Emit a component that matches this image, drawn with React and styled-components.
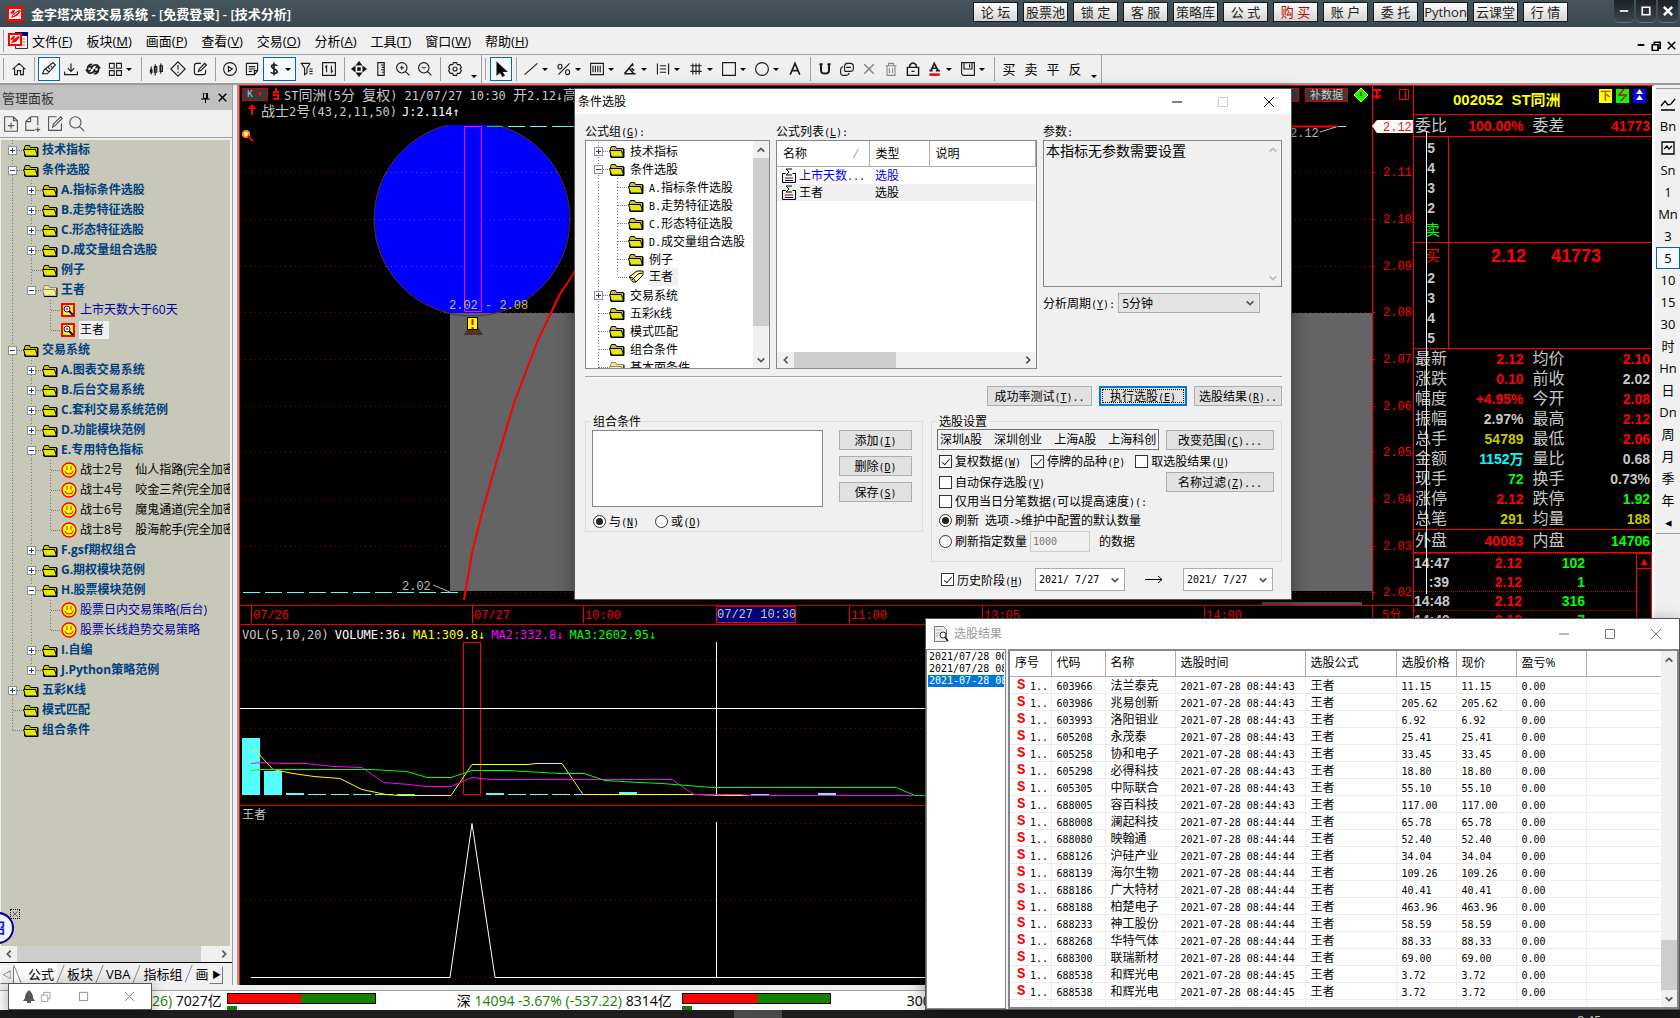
import styled, { createGlobalStyle, css } from "styled-components";

const UI = `"Open Sans", "Noto Sans CJK SC", sans-serif`;
const MONO = `"Liberation Mono", "Noto Sans CJK SC", monospace`;

const GlobalStyle = createGlobalStyle`
  * {
    box-sizing: border-box;
  }
  body {
    margin: 0;
    background: #f0f0f0;
    overflow: hidden;
  }
  button, input, select, textarea {
    font: inherit;
    color: inherit;
    margin: 0;
    padding: 0;
    border: 0;
    background: none;
    border-radius: 0;
  }
`;

const Page = styled.div`
  position: relative;
  display: flex;
  flex-direction: column;
  height: 100vh;
  overflow: hidden;
  font-family: ${UI};
  font-size: 13px;
  line-height: 16px;
  color: #000;
  white-space: nowrap;
`;

/* ---------- mixed text: wide glyphs at full size, ascii in a narrow face ---------- */

const Ascii = styled.span`
  font-family: "DejaVu Sans Mono", monospace;
  font-size: ${(p) => p.$size}px;
  line-height: 10px;
`;

const SongBox = styled.span`
  display: inline-block;
  height: 16px;
  vertical-align: top;
  font-family: "Noto Sans CJK SC", sans-serif;
  font-size: ${(p) => p.$size}px;
  line-height: 16px;
  white-space: pre;
`;

// "_X" in a label marks the keyboard mnemonic
const Song = ({ children, size = 12 }) => (
  <SongBox $size={size}>
    {String(children)
      .split(/([\x20-\x7e↓↑]+)/)
      .map((run, i) => {
        if (i % 2 === 0) return run;
        const [head, tail] = run.split("_");
        return (
          <Ascii key={i} $size={size - 2}>
            {head}
            {tail && <u>{tail[0]}</u>}
            {tail && tail.slice(1)}
          </Ascii>
        );
      })}
  </SongBox>
);

/* ---------- title bar ---------- */

const TitleBar = styled.header`
  display: flex;
  align-items: center;
  flex: none;
  height: 27px;
  padding-left: 7px;
  background: linear-gradient(#46545b, #3b484f);
  color: #fff;
`;

const TitleText = styled.h1`
  margin: 0 auto 0 8px;
  font-size: 13px;
  font-weight: 600;
`;

const LinkRow = styled.nav`
  display: flex;
  gap: 5px;
  align-self: flex-start;
  margin: 2px 46px 0 0;
`;

const LinkButton = styled.button`
  width: 45px;
  height: 20px;
  border: 1px solid #14191c;
  background: linear-gradient(#fdfdfd, #d5d5d5);
  color: ${(p) => (p.$hot ? "#c00000" : "#222")};
  font-size: 13px;
  line-height: 16px;
  text-align: center;
`;

const WinControls = styled.div`
  display: flex;
  gap: 2px;
  align-self: flex-start;
  margin-right: 2px;
`;

const WinButton = styled.button`
  display: grid;
  place-items: center;
  width: 20px;
  height: 22px;
  border-radius: 0 0 5px 5px;
  background: linear-gradient(#1c2226, #3c464c);
  box-shadow: 0 1px 0 #66747b;
`;

/* ---------- menu and tool bars ---------- */

const MenuBar = styled.nav`
  display: flex;
  align-items: center;
  flex: none;
  height: 28px;
  padding: 0 4px 0 1px;
  border-bottom: 1px solid #a0a0a0;
  background: #f0f0f0;
`;

const Grip = styled.span`
  width: 3px;
  height: 22px;
  margin-right: 4px;
  border-right: 1px solid #a0a0a0;
`;

const MenuItem = styled.button`
  margin-left: ${(p) => (p.$first ? 4 : 14)}px;
`;

const MdiControls = styled.div`
  display: flex;
  gap: 6px;
  margin: 10px 0 0 auto;
`;

const ToolBar = styled.div`
  display: flex;
  align-items: center;
  flex: none;
  height: 30px;
  border-bottom: 2px solid #9a9a9a;
  background: #f0f0f0;
`;

const ToolGroup = styled.div`
  display: flex;
  align-items: center;
  height: 28px;
  padding-left: 1px;
  border-right: 1px solid #a0a0a0;
`;

const Tool = styled.button`
  display: flex;
  align-items: center;
  justify-content: center;
  width: ${(p) => (p.$caret ? 33 : 22)}px;
  height: 24px;
  outline: ${(p) => (p.$on ? "1px solid #0a64ad" : "none")};
  outline-offset: -1px;
  background: ${(p) => (p.$on ? "#f5f9fd" : "none")};

  svg {
    flex: none;
  }
`;

const Caret = styled.span`
  width: ${(p) => (p.$low ? 15 : 11)}px;
  flex: none;

  &::after {
    content: "";
    display: block;
    margin: ${(p) => (p.$low ? "14px" : "0")} auto 0;
    width: 0;
    border: 3px solid transparent;
    border-top-color: #000;
    border-bottom: 0;
  }
`;

const Divider = styled.span`
  width: 1px;
  height: 24px;
  margin: 0 3px 0 4px;
  background: #a0a0a0;
`;

const glyphs = {
  home: <path d="M2 10.5 10 3l8 7.5M4.500 9v8H8v-5h4v5h3.500V9" />,
  pen: <path d="m2 16 2-5L15 2l3 3L8 16zM6 10l4 4M9 8l2 2M12 6l2 2" />,
  down: <path d="M10 3v10M6 9l4 4 4-4M2 13v4h16v-4" />,
  sync: (
    <path
      d="M9 4C3 4 2 10 4 13M1 11l3 3 3-3M4 7h4M11 16c6 0 7-6 5-9M19 9l-3-3-3 3M12 13h4M8 10c0-5 7-7 9-3M12 10c0 5-7 7-9 3"
      strokeWidth="2"
    />
  ),
  grid: <path d="M3 3h6v6H3zM12 3h6v6h-6zM3 12h6v6H3zM12 12h6v6h-6z" />,
  candle: <path d="M4 7v10M3 11h2v3H3zM9 4v14M8 7h3v7H8zM16 3v13M15 6h3v7h-3z" />,
  alert: <path d="m10 1 9 9-9 9-9-9zM10 5v6M10 13v2" />,
  edit: <path d="M11 3H6a3 3 0 0 0-3 3v8a3 3 0 0 0 3 3h8a3 3 0 0 0 3-3v-3M8 13l1-3 7-7 2 2-7 7z" />,
  play: <path d="M10 2a8 8 0 1 1 0 16 8 8 0 0 1 0-16zM8 7v6l5-3z" />,
  note: <path d="M3 3h14v9l-4 5H3zM6 7h8M6 10h8M6 13h4M17 12h-4v5" />,
  dollar: <path d="M14 6c-1-2-7-2-7 1s7 3 7 6-6 3-8 1M10 2v16" strokeWidth="2" />,
  filter: <path d="M2 3h12M3 3l4 6v8l3-2V9l4-6M13 10h4M13 13h4M13 16h4" />,
  swap: <path d="M2 2h16v16H2zM7 14V6L5 8M13 6v8l2-2" />,
  move: <path d="m10 1 3 4H7zM10 19l3-4H7zM1 10l4-3v6zM19 10l-4-3v6zM8.500 8.500h3v3h-3z" fill="#000" />,
  ruler: <path d="M6 2h8v16H6zM10 5h4M11 8h3M10 11h4M11 14h3" />,
  zoomIn: <path d="M8.500 2a6.500 6.500 0 1 1 0 13 6.500 6.500 0 0 1 0-13zM13 13l5 5M6 8.500h5M8.500 6v5" />,
  zoomOut: <path d="M8.500 2a6.500 6.500 0 1 1 0 13 6.500 6.500 0 0 1 0-13zM13 13l5 5M6 8.500h5" />,
  gear: (
    <>
      <path d="m8 2 4 0 1 2.500 3 0 2 3.500-1.500 2L18 12l-2 3.500-3 0L12 18H8l-1-2.500-3 0L2 12l1.500-2L2 8l2-3.500 3 0z" />
      <circle cx="10" cy="10" r="2.500" />
    </>
  ),
  cursor: <path d="m5 2 12 11h-6l3 5-2 1-3-5-4 3z" fill="#000" />,
  line: <path d="M2 17 18 3" />,
  percent: <path d="M3 17 17 3M5 4a2.500 3 0 1 1 0 6 2.500 3 0 0 1 0-6zM14.500 11a2.500 3 0 1 1 0 6 2.500 3 0 0 1 0-6z" />,
  fence: <path d="M2 3h16v14H2zM5 6v8M8 6v8M11 6v8M14 6v8" />,
  angle: <path d="M3 16 13 4l1 2M3 16h14M9 9l5 6M12 9l3 3" strokeWidth="2" />,
  hbars: <path d="M3 3v14M17 3v14M6 6h8M6 10h8M6 14h8" />,
  hash: <path d="M6 3v14M10 3v14M14 3v14M3 6h14M3 13h14" />,
  square: <path d="M2 2h16v16H2z" />,
  circle: <circle cx="10" cy="10" r="8" />,
  letter: <path d="m4 17 6-14 6 14M6 12h8" strokeWidth="2" />,
  magnet: <path d="M5 4v8c0 5 10 5 10 0V4M3 4h4M13 4h4" strokeWidth="2.500" />,
  copy: (
    <>
      <path d="M8 3h6q4 0 4 4v2q0 4-4 4H8q-1 0-1-1V7q0-4 4-4" />
      <path d="M5 7q-3 1-3 4v3q0 4 4 4h3q3 0 4-3M9 8h6" />
    </>
  ),
  cross: <path d="m4 4 12 12M16 4 4 16" stroke="#888" strokeWidth="2" />,
  trash: <path d="M3 6h14M7 6V3h6v3M5 6v12h10V6M8 9v6M12 9v6" stroke="#888" />,
  lock: <path d="M3 8h14v10H3zM6 8V5q4-5 8 0v3M8 13h4" strokeWidth="1.800" />,
  color: (
    <>
      <path d="m5 12 4-9 5 9M7 9h5M3 12h4M11 12h5" strokeWidth="2" />
      <path d="M3 17h13" stroke="#e00000" strokeWidth="3" />
    </>
  ),
  save: <path d="M2 2h16v16H4l-2-2zM5 2v8h10V2M12 4v4" />,
  docPlus: <path d="M2 1h11l5 5v13H2zM13 1v5h5M10 8v8M6 12h8" />,
  docAdd: <path d="M7 1h9v11M7 1 1 7v11h11M7 1v6H1M16 14v6M13 17h6" />,
  pencil: <path d="M12 1H2v17h16V9M7 14l1-4 9-9 2 2-9 9z" />,
  search: <path d="M8 1a7 7 0 1 1 0 14A7 7 0 0 1 8 1zM13 13l6 6" />,
};

const Glyph = ({ name, color = "#1a1a1a", size = 16 }) => (
  <svg width={size} height={size} viewBox="0 0 20 20" fill="none" stroke={color} strokeWidth="1.400">
    {glyphs[name]}
  </svg>
);

/* ---------- small line icons for window frames ---------- */

const frameGlyphs = {
  min: <path d="M1 6h10" />,
  max: <path d="M1.500 1.500h9v9h-9z" />,
  close: <path d="m1 1 10 10M11 1 1 11" />,
  restore: <path d="M1.500 4.500h7v7h-7zM4 4V1.500h7v7H9" />,
  up: <path d="m2 8 4-4 4 4" strokeWidth="2" />,
  down: <path d="m2 4 4 4 4-4" strokeWidth="2" />,
  left: <path d="M8 2 4 6l4 4" strokeWidth="2" />,
  right: <path d="m4 2 4 4-4 4" strokeWidth="2" />,
};

const FrameGlyph = ({ name, color = "#000", size = 12, weight = 1 }) => (
  <svg width={size} height={size} viewBox="0 0 12 12" fill="none" stroke={color} strokeWidth={weight}>
    {frameGlyphs[name]}
  </svg>
);

const AppLogo = () => (
  <svg width="16" height="16" viewBox="0 0 16 16">
    <path fill="#f00" d="M0 0h16v16H0z" />
    <path fill="#fff" d="M2 3h12v10H2z" />
    <path d="m3 7 3-3h2l-1 3-3 1zM4 12l2-4 6-4 2 1-4 5-3 1z" fill="#f00" />
    <path d="M6 10 11 6" stroke="#fff" />
  </svg>
);

const MdiLogo = () => (
  <svg width="20" height="18" viewBox="0 0 20 18">
    <path fill="#eee" stroke="#333" d="M7.500.5h12v16h-12z" />
    <path fill="#000080" d="M7 0h13v4H7z" />
    <path d="M11 7h6M11 10h6M11 13h6" stroke="#888" />
    <path fill="#f00" d="M0 1h14v13H0z" />
    <path fill="#fff" d="M2 3h10v9H2z" />
    <path d="m2 7 3-3h2L6 7 4 8zM3 11l2-3 5-4 2 1-4 5z" fill="#f00" />
  </svg>
);

/* ---------- workspace ---------- */

const Workspace = styled.main`
  display: flex;
  flex: 1;
  min-height: 0;
`;

const SidePanel = styled.aside`
  display: flex;
  flex-direction: column;
  flex: none;
  width: 233px;
  border-right: 1px solid #9a9a9a;
`;

const PanelHead = styled.div`
  display: flex;
  align-items: center;
  gap: 8px;
  height: 25px;
  flex: none;
  padding: 0 5px 0 2px;
  background: #c0c0c0;
  color: #333;
`;

const PanelName = styled.h2`
  flex: 1;
  margin: 0;
  font-size: 13px;
  font-weight: 400;
`;

const PanelTools = styled.div`
  display: flex;
  gap: 6px;
  align-items: center;
  height: 28px;
  flex: none;
  padding-left: 3px;
  border-bottom: 1px solid #9a9a9a;

  button {
    display: flex;
  }
`;

const TreeBox = styled.div`
  flex: 1;
  min-height: 0;
  overflow: hidden;
  margin: 2px 2px 0 1px;
  background: #c8c8b8;
`;

const Row = styled.div`
  display: flex;
  align-items: stretch;
  height: ${(p) => p.$h}px;
  padding-left: 6px;
`;

const dotted = css`
  background-image: repeating-linear-gradient(#777 0 1px, transparent 1px 3px);
  background-repeat: no-repeat;
  background-position: 5px 0;
`;

const Guide = styled.span`
  flex: none;
  width: 19px;
  ${(p) => p.$line && dotted}
  background-size: 1px 100%;
`;

const Twist = styled.span`
  position: relative;
  flex: none;
  width: 16px;
  ${dotted}
  background-size: 1px ${(p) => (p.$last ? "50%" : "100%")};

  &::before {
    content: "";
    position: absolute;
    left: 6px;
    right: 1px;
    top: 50%;
    border-top: 1px dotted #777;
  }
`;

const Expander = styled.button`
  position: absolute;
  left: 1px;
  top: calc(50% - 4px);
  width: 9px;
  height: 9px;
  background: #fff;
  outline: 1px solid #919191;
  outline-offset: -1px;

  &::before {
    content: "";
    position: absolute;
    left: 2px;
    top: 4px;
    width: 5px;
    height: 1px;
    background: #1d3f8f;
  }
  &::after {
    content: "";
    display: ${(p) => (p.$open ? "none" : "block")};
    position: absolute;
    left: 4px;
    top: 2px;
    width: 1px;
    height: 5px;
    background: #1d3f8f;
  }
`;

const RowIcon = styled.span`
  display: flex;
  align-items: center;
  flex: none;
  width: 16px;
`;

const RowText = styled.span`
  align-self: center;
  margin-left: ${(p) => (p.$tone === "plain" ? 4 : 2)}px;
  padding: 0 ${(p) => (p.$picked ? 5 : 0)}px 0 1px;
  font-size: 12px;
  font-weight: ${(p) => (p.$tone === "group" ? 700 : 400)};
  color: ${(p) => ({ group: "#00407f", item: "#00009c" })[p.$tone] || "#000"};
  background: ${(p) => (p.$picked ? "#f0f0f0" : "none")};
  line-height: ${(p) => (p.$picked ? 18 : 16)}px;
  white-space: pre;
`;

const Folder = ({ pale }) => (
  <svg width="16" height="13" viewBox="0 0 16 13">
    <path d="M1.500 12V3.500l1-2h4l1 2h7V12z" fill={pale ? "#eee880" : "#c8c800"} stroke={pale ? "#888" : "#000"} />
    <path d="M.5 5.500h12l2 6.500h-12z" fill={pale ? "#f6f090" : "#e6e610"} stroke={pale ? "#888" : "#000"} />
    <path d="M15 4v8.500H2" fill="none" stroke="#000" />
  </svg>
);

const OpenFolder = () => (
  <svg width="16" height="14" viewBox="0 0 16 14">
    <path d="m1 7 8-6h6v4l-7 7H5z" fill="#ffff9a" stroke="#000" />
    <path d="m4 10 6-6 4-1M1 7l4 1 3 4" fill="none" stroke="#000" />
  </svg>
);

const Smile = () => (
  <svg width="16" height="16" viewBox="0 0 16 16">
    <circle cx="8" cy="8" r="7" fill="#ff0" stroke="#f00" strokeWidth="1.400" />
    <path d="M6 4v4M10 4v4M4 9q0 3 4 3t4-3" fill="none" stroke="#f00" />
  </svg>
);

const Finder = () => (
  <svg width="14" height="14" viewBox="0 0 14 14">
    <path fill="#ff0" stroke="#f00" strokeWidth="2" d="M1 1h12v12H1z" />
    <circle cx="6" cy="6" r="3" fill="#fff" stroke="#0000b0" />
    <path d="m8 8 4 4" stroke="#0000b0" strokeWidth="2" />
    <circle cx="6" cy="6" r="1" fill="#f00" />
  </svg>
);

const icons = {
  folder: <Folder />,
  pale: <Folder pale />,
  openFolder: <OpenFolder />,
  smile: <Smile />,
  finder: <Finder />,
};

const TreeRow = ({ node, height, plain }) => {
  const [level, mark, icon, text, picked, opts = ""] = node;
  const tone = plain ? "plain" : icon === "folder" || icon === "pale" ? "group" : picked || opts.includes("k") ? "dark" : "item";
  return (
    <Row $h={height}>
      {Array.from({ length: level }, (_, i) => (
        <Guide key={i} $line={!(i === 1 && opts.includes("e"))} />
      ))}
      <Twist $last={opts.includes("l")}>{mark && <Expander $open={mark === "-"} aria-label={text} />}</Twist>
      <RowIcon>{icons[icon]}</RowIcon>
      <RowText $tone={tone} $picked={picked}>
        {plain ? <Song>{text}</Song> : text}
      </RowText>
    </Row>
  );
};

// level, expander, icon, label, picked, options (l: last child, e: parent is last, k: black)
const sideTree = [
  [0, "+", "folder", "技术指标"],
  [0, "-", "folder", "条件选股"],
  [1, "+", "folder", "A.指标条件选股"],
  [1, "+", "folder", "B.走势特征选股"],
  [1, "+", "folder", "C.形态特征选股"],
  [1, "+", "folder", "D.成交量组合选股"],
  [1, "", "folder", "例子"],
  [1, "-", "pale", "王者", false, "l"],
  [2, "", "finder", "上市天数大于60天", false, "e"],
  [2, "", "finder", "王者", true, "el"],
  [0, "-", "folder", "交易系统"],
  [1, "+", "folder", "A.图表交易系统"],
  [1, "+", "folder", "B.后台交易系统"],
  [1, "+", "folder", "C.套利交易系统范例"],
  [1, "+", "folder", "D.功能模块范例"],
  [1, "-", "folder", "E.专用特色指标"],
  [2, "", "smile", "战士2号    仙人指路(完全加密)", false, "k"],
  [2, "", "smile", "战士4号    咬金三斧(完全加密)", false, "k"],
  [2, "", "smile", "战士6号    魔鬼通道(完全加密)", false, "k"],
  [2, "", "smile", "战士8号    股海舵手(完全加密)", false, "kl"],
  [1, "+", "folder", "F.gsf期权组合"],
  [1, "+", "folder", "G.期权模块范例"],
  [1, "-", "folder", "H.股票模块范例"],
  [2, "", "smile", "股票日内交易策略(后台)"],
  [2, "", "smile", "股票长线趋势交易策略", false, "l"],
  [1, "+", "folder", "I.自编"],
  [1, "+", "folder", "J.Python策略范例", false, "l"],
  [0, "+", "folder", "五彩K线"],
  [0, "", "folder", "模式匹配"],
  [0, "", "folder", "组合条件", false, "l"],
];

const dialogTree = [
  [0, "+", "folder", "技术指标"],
  [0, "-", "folder", "条件选股"],
  [1, "", "folder", "A.指标条件选股"],
  [1, "", "folder", "B.走势特征选股"],
  [1, "", "folder", "C.形态特征选股"],
  [1, "", "folder", "D.成交量组合选股"],
  [1, "", "folder", "例子"],
  [1, "", "openFolder", "王者", true, "l"],
  [0, "+", "folder", "交易系统"],
  [0, "", "folder", "五彩K线"],
  [0, "", "folder", "模式匹配"],
  [0, "", "folder", "组合条件"],
  [0, "", "pale", "基本面条件"],
];

/* ---------- scroll bars ---------- */

const Scroll = styled.div`
  display: flex;
  flex-direction: ${(p) => (p.$v ? "column" : "row")};
  flex: none;
  ${(p) => (p.$v ? "width" : "height")}: 16px;
  background: #f0f0f0;

  button {
    display: grid;
    place-items: center;
    width: 17px;
    height: 17px;
    flex: none;
    align-self: center;
  }
`;

const Track = styled.div`
  flex: 1;
  display: flex;
  flex-direction: inherit;
`;

const Thumb = styled.div`
  flex: ${(p) => p.$len} 0 0;
  background: #cdcdcd;
`;

const Room = styled.div`
  flex: ${(p) => p.$len} 0 0;
`;

const ScrollBar = ({ vertical, before = 0, thumb, after = 0, dim }) => {
  const color = dim ? "#bbb" : "#555";
  return (
    <Scroll $v={vertical}>
      <button aria-label="back">
        <FrameGlyph name={vertical ? "up" : "left"} color={color} size={10} weight={2} />
      </button>
      <Track>
        <Room $len={before} />
        <Thumb $len={thumb} />
        <Room $len={after} />
      </Track>
      <button aria-label="forward">
        <FrameGlyph name={vertical ? "down" : "right"} color={color} size={10} weight={2} />
      </button>
    </Scroll>
  );
};

const TabStrip = styled.div`
  display: flex;
  align-items: stretch;
  height: 22px;
  flex: none;
  margin-bottom: 1px;
  border-top: 1px solid #000;
  overflow: hidden;
`;

const TabArrow = styled.button`
  width: 14px;
  flex: none;
  margin-top: 3px;
  border: 1px solid #fff;
  border-right-color: #777;
  border-bottom-color: #777;
  background: #f0f0f0;
  font-size: 9px;
  line-height: 12px;
`;

const Tab = styled.button`
  position: relative;
  flex: ${(p) => (p.$cut ? "0 0 24px" : "none")};
  overflow: ${(p) => (p.$cut ? "hidden" : "visible")};
  padding: 0 3px 0 ${(p) => (p.$first ? 14 : 10)}px;
  background: ${(p) => (p.$first ? "#fff" : "none")};
  text-align: left;

  &::after {
    content: "";
    position: absolute;
    left: 3px;
    top: 2px;
    height: 18px;
    border-left: 1px solid #888;
    transform: skewX(${(p) => (p.$first ? 22 : -22)}deg);
  }
`;

/* ---------- chart ---------- */

const ChartArea = styled.section`
  display: flex;
  flex-direction: column;
  flex: 1;
  min-width: 0;
  margin-left: 4px;
  border-left: 2px solid #9a9a9a;
  background: #000;
  font-family: ${MONO};
`;

const Pane = styled.div`
  position: relative;
  flex: ${(p) => p.$share} 0 0;
  min-height: 0;
  overflow: hidden;
  border-left: 1px solid #f00;
  border-top: 1px solid #e00000;

  & > svg {
    display: block;
    width: 100%;
    height: 100%;
  }
`;

const PaneHead = styled.div`
  position: absolute;
  inset: 0 0 auto 0;
  padding-left: 2px;
  color: #c8c8c8;
`;

const HeadLine = styled.div`
  display: flex;
  align-items: center;
  gap: ${(p) => p.$gap}px;
  height: 16px;
`;

const KindButton = styled.button`
  width: 26px;
  height: 13px;
  border: 1px solid #d00000;
  background: #3a3a3a;
  color: #b0c4de;
  font: 10px/11px ${MONO};
  text-align: left;
  padding-left: 4px;

  i {
    color: #f00;
    font-style: normal;
    margin-left: 3px;
  }
`;

const Tint = styled.span`
  color: ${(p) => p.$c};
`;

const PaneTools = styled.div`
  position: absolute;
  top: 1px;
  right: 3px;
  display: flex;
  align-items: center;
  gap: 6px;
`;

const DataButton = styled.button`
  height: 14px;
  width: 43px;
  border: 1px solid #e00000;
  background: #3a3a3a;
  color: #ccc;
  font: 11px/12px ${UI};
`;

const gridY = [86, 133, 180, 226, 273, 320, 366, 413, 460, 506];
const priceTicks = ["2.11", "2.10", "2.09", "2.08", "2.07", "2.06", "2.05", "2.04", "2.03", "2.02"];

const PricePane = () => (
  <Pane $share={521}>
    <svg fontFamily="Liberation Mono, Noto Sans CJK SC, monospace" fontSize="12">
      <defs>
        <clipPath id="bubble">
          <path d="M0 39h1200v190H0z" />
        </clipPath>
      </defs>
      <g stroke="#900" strokeDasharray="1 4">
        {gridY.map((y) => (
          <path key={y} d={`M0 ${y}.5H1132`} />
        ))}
      </g>
      <ellipse cx="232" cy="133" rx="98" ry="97" fill="#00f" stroke="#5a3020" clipPath="url(#bubble)" />
      <g stroke="#5050c8" strokeDasharray="1 4">
        <path d="M146 86.5H318M134 133.500H330M146 180.500H318" />
      </g>
      <path d="M210 227h922v278H210z" fill="#646464" />
      <path d="M203 226q29 8 58 0" fill="none" stroke="#5a3020" />
      <path d="M224.500 40.500h17v185h-17z" fill="#00f" stroke="#f0f" />
      <path d="M247 40.500h16" stroke="#3c0" />
      <path d="M268 40.500h17M290 40.500h17M312 40.500h30" stroke="#5ff" />
      <path
        d="M342 170 332 190 320 208 298 254 274 317 255 381 242 427 232 467 224 514"
        fill="none"
        stroke="#f00"
        strokeWidth="2"
      />
      <path d="M3 506.500h216" stroke="#5ff" strokeDasharray="17 5" />
      <text x="162" y="504" fill="#b8b8b8">2.02</text>
      <path d="m193 499 17 7" stroke="#b8b8b8" />
      <text x="209" y="223" fill="#c0c080">2.02 - 2.08</text>
      <path d="m224 249 4-8h10l5 8z" fill="#5a3020" />
      <path d="M227.500 231.500h10v12h-10z" fill="#ff0" stroke="#000" />
      <path d="M232.500 233v6M232.500 241v2" stroke="#f00" strokeWidth="2" />
      <circle cx="6" cy="48" r="3" fill="#fff" stroke="#f90" strokeWidth="2" />
      <path d="m8 50 5 5" stroke="#f00" strokeWidth="2" />
      <path d="M1052 40.500h46" stroke="#f00" strokeWidth="2" />
      <path d="M1098 40.500h8" stroke="#5ff" />
      <text x="1050" y="51" fill="#b8b8b8">2.12</text>
      <path d="m1080 46 16-5" stroke="#b8b8b8" />
      <path d="M1132.500 0v514" stroke="#f00" />
      <path d="m1132 40 5-6h36v13h-36z" fill="#fff" />
      <g fill="#f00">
        <text x="1143" y="45">2.12</text>
        {priceTicks.map((t, i) => (
          <text key={t} x="1143" y={gridY[i] + 4}>
            {t}
          </text>
        ))}
      </g>
      <g stroke="#f00">
        {gridY.map((y) => (
          <path key={y} d={`M1132 ${y}.5h3`} />
        ))}
      </g>
      <path d="M1022 516h100v4h-100z" fill="#505050" />
    </svg>
    <PaneHead>
      <HeadLine $gap={4}>
        <KindButton>
          K<i>▾</i>
        </KindButton>
        <svg width="8" height="14" viewBox="0 0 8 14" fill="none" stroke="#f00" strokeWidth="2">
          <path d="M7 5H2v3h4v4H1M4 1v3" />
        </svg>
        <Song size={14}>ST同洲(5分 复权) 21/07/27 10:30 开2.12↓高2.12↓</Song>
      </HeadLine>
      <HeadLine $gap={5}>
        <svg width="14" height="12" viewBox="0 0 14 12">
          <path d="m10 0 4 5h-3v6H9V5H6z" fill="#f00" />
        </svg>
        <Song size={14}>战士2号(43,2,11,50)</Song>
        <Tint $c="#fff">
          <Song size={14}>J:2.114↑</Song>
        </Tint>
      </HeadLine>
    </PaneHead>
    <PaneTools>
      <DataButton aria-label="more" />
      <DataButton>补数据</DataButton>
      <svg width="56" height="16" viewBox="0 0 56 16">
        <path d="m7 1 7 7-7 7-7-7z" fill="#0f0" stroke="#ff0" />
        <path d="M7 5v4" stroke="#c33" strokeWidth="2" />
        <path d="M19 3h8M23 2v10M19 8q4 6 8 0" fill="none" stroke="#f00" strokeWidth="2" />
        <path d="M45.500 2.500h9v10h-9zM51.500 2v10" fill="none" stroke="#f00" />
      </svg>
    </PaneTools>
  </Pane>
);

const times = [
  [11, "07/26"],
  [232, "07/27"],
  [343, "10:00"],
  [609, "11:00"],
  [742, "13:05"],
  [964, "14:00"],
];

const TimePane = () => (
  <Pane $share={18}>
    <svg fontFamily="Liberation Mono, Noto Sans CJK SC, monospace" fontSize="12" fill="#f00">
      {times.map(([x, t]) => (
        <g key={t}>
          <path d={`M${x}.5 0v17`} stroke="#f00" />
          <text x={x + 2} y="13">
            {t}
          </text>
        </g>
      ))}
      <path d="M1132.500 0v17" stroke="#f00" />
      <text x="1142" y="13">5分</text>
      <path d="M476.500.5h79v16h-79z" fill="#000080" stroke="#f00" />
      <text x="477" y="12" fill="#d8d8d8">
        07/27 10:30
      </text>
    </svg>
  </Pane>
);

const volBars = [
  [0, 57], [1, 24], [2, 2], [3, 1], [4, 1], [5, 1], [6, 1], [7, 1], [11, 2], [12, 1], [13, 1], [14, 1], [15, 1],
  [16, 1], [17, 3], [18, 1], [19, 1], [20, 1], [21, 1], [23, 1], [26, 2],
];

const VolumePane = () => (
  <Pane $share={180}>
    <svg fill="none">
      <path d="M0 35.500h1174M0 103.500h1174M0 170.500h1174" stroke="#900" strokeDasharray="1 4" />
      {volBars.map(([i, h]) => (
        <rect key={i} x={2 + Math.round(i * 22.15)} y={170 - h} width="18" height={h} fill="#5ff" />
      ))}
      <path d="M223.500 17.500h17v152h-17z" fill="#000" stroke="#f00" />
      <path d="M0 83.500h1174M476.500 17v154" stroke="#fff" />
      <path
        stroke="#ff0"
        d="M11 120.500 33 144.500 53 148.500 74 151.500 100 153.500 122 164.500 146 169.500 160 170.500H211L232 139.500H288L296 138.500H322L343 169.500H454L488 170.500H510"
      />
      <path
        stroke="#f0f"
        d="M11 138.500 22 137.500 45 138.500 66 138.500 94 141.500 122 142.500 144 157.500 169 159.500 185 161.500H211L232 152.500 251 154.500H432L454 169.500H500L510 170.500H673"
      />
      <path
        stroke="#0f0"
        d="M11 145.500 22 144.500H131L167 146.500 187 152.500H211L232 145.500H267L320 148.500H344L365 155.500 400 157.500 422 158.500 472 162.500H656L675 170.500H1174"
      />
    </svg>
    <PaneHead>
      <HeadLine $gap={6}>
        <Song size={14}>VOL(5,10,20)</Song>
        <Tint $c="#fff">
          <Song size={14}>VOLUME:36↓</Song>
        </Tint>
        <Tint $c="#ff0">
          <Song size={14}>MA1:309.8↓</Song>
        </Tint>
        <Tint $c="#f0f">
          <Song size={14}>MA2:332.8↓</Song>
        </Tint>
        <Tint $c="#0f0">
          <Song size={14}>MA3:2602.95↓</Song>
        </Tint>
      </HeadLine>
    </PaneHead>
  </Pane>
);

const SignalPane = () => (
  <Pane $share={180}>
    <svg fill="none">
      <path d="M0 17.500h1174M0 94.500h1174M0 171.500h1174" stroke="#900" strokeDasharray="1 4" />
      <path d="M11 171.500H210L232 17.500 255 171.500H1174M476.500 16v156" stroke="#fff" />
    </svg>
    <PaneHead>
      <Song size={12}>王者</Song>
    </PaneHead>
  </Pane>
);

/* ---------- quote panel ---------- */

const QuotePanel = styled.section`
  position: relative;
  display: flex;
  flex-direction: column;
  flex: none;
  width: 242px;
  border-left: 1px solid #f00;
  border-top: 1px solid #f00;
  border-right: 3px solid #fff;
  background: #000;
  color: #c8c8c8;
  overflow: hidden;
  font: 16px/20px "Liberation Sans", "Noto Sans CJK SC", sans-serif;
`;

const QuoteHead = styled.div`
  display: flex;
  align-items: center;
  gap: 4px;
  flex: none;
  height: 28px;
  padding: 0 6px 0 39px;
  color: #ff0;
  font-weight: 700;
`;

const QuoteName = styled.h2`
  flex: 1;
  margin: 0;
  font-size: 15px;
  white-space: pre;
`;

const Badge = styled.span`
  align-self: flex-start;
  margin-top: 3px;
  width: 13px;
  height: 14px;
  background: ${(p) => p.$bg};
  color: ${(p) => p.$c};
  font-size: 11px;
  line-height: 14px;
  text-align: center;
`;

const QuoteRow = styled.div`
  display: grid;
  grid-template-columns: 32px 1fr 34px 1fr;
  column-gap: 2px;
  align-items: center;
  flex: none;
  height: ${(p) => p.$h || 20}px;
  padding: 0 2px 0 1px;
  border-top: ${(p) => (p.$rule ? "1px solid #f00" : "0")};
  border-bottom: ${(p) => (p.$under ? "1px solid #f00" : "0")};

  b {
    font-size: 14px;
    text-align: right;
    padding-right: 7px;
  }
  b:last-child {
    padding-right: 0;
  }
`;

const Figure = styled.b`
  color: ${(p) => p.$c};
`;

const Depth = styled.div`
  display: flex;
  flex: none;
  height: 106px;
  border-bottom: 1px solid #f00;
`;

const Levels = styled.div`
  width: 35px;
  padding-right: 13px;
  border-right: 1px solid #f00;
  text-align: right;
  font-size: 14px;
  font-weight: 700;
  padding-top: 1px;
`;

const Side = styled.div`
  color: ${(p) => p.$c};
  font-size: 15px;
  font-weight: 400;
  line-height: 24px;
  margin-right: -5px;
`;

const BigOrder = styled.div`
  display: flex;
  gap: 25px;
  padding: 3px 0 0 42px;
  color: #f00;
  font-size: 18px;
  font-weight: 700;
`;

const Cursor = styled.div`
  position: absolute;
  left: 12px;
  top: 45px;
  width: 1px;
  height: 463px;
  background: #fff;
`;

const Ticks = styled.div`
  display: flex;
  flex: 1;
  min-height: 0;
  overflow: hidden;
`;

const TickList = styled.div`
  flex: 1;
`;

const TickRow = styled.div`
  display: grid;
  grid-template-columns: 35px 73px 63px;
  height: 19px;
  font-size: 14px;
  font-weight: 700;
  line-height: 18px;
  text-align: right;
  border-top: 1px dotted ${(p) => (p.$rule ? "#c00" : "transparent")};
`;

const TickScroll = styled.div`
  width: 16px;
  border: 1px solid #f00;
  color: #f00;
  font-size: 11px;
  line-height: 14px;
  text-align: center;

  &::after {
    content: "";
    display: block;
    border-top: 1px solid #f00;
  }
`;

const R = "#f00";
const G = "#0f0";
const W = "#c8c8c8";
const Y = "#c8c800";

const quotes = [
  ["最新", "2.12", R, "均价", "2.10", R],
  ["涨跌", "0.10", R, "前收", "2.02", W],
  ["幅度", "+4.95%", R, "今开", "2.08", R],
  ["振幅", "2.97%", W, "最高", "2.12", R],
  ["总手", "54789", Y, "最低", "2.06", R],
  ["金额", "1152万", "#0ff", "量比", "0.68", W],
  ["现手", "72", G, "换手", "0.73%", W],
  ["涨停", "2.12", R, "跌停", "1.92", G],
  ["总笔", "291", Y, "均量", "188", Y],
];

const tickData = [
  ["14:47", "2.12", "102", true],
  [":39", "2.12", "1", false],
  ["14:48", "2.12", "316", true],
  ["14:49", "2.12", "7", true],
];

const QuoteLine = ({ data: [a, av, ac, b, bv, bc], ...rest }) => (
  <QuoteRow {...rest}>
    <span>{a}</span>
    <Figure $c={ac}>{av}</Figure>
    <span>{b}</span>
    <Figure $c={bc}>{bv}</Figure>
  </QuoteRow>
);

const Quote = () => (
  <QuotePanel>
    <QuoteHead>
      <QuoteName>002052  ST同洲</QuoteName>
      <Badge $bg="#ff0" $c="#a60">下</Badge>
      <Badge $bg="#0f0">
        <svg width="9" height="12" viewBox="0 0 9 12" fill="none" stroke="#d00" strokeWidth="1.500">
          <path d="M6 0 1 6h7L3 12" />
        </svg>
      </Badge>
      <Badge $bg="#00f">
        <svg width="9" height="12" viewBox="0 0 9 12" fill="#ff8">
          <path d="M4.500 0 8 5H1zM4.500 6 8 11H1z" />
        </svg>
      </Badge>
    </QuoteHead>
    <QuoteLine $h={23} $rule $under data={["委比", "100.00%", R, "委差", "41773", R]} />
    <Depth>
      <Levels>
        <div>5</div>
        <div>4</div>
        <div>3</div>
        <div>2</div>
        <Side $c="#0f0">卖</Side>
      </Levels>
    </Depth>
    <Depth>
      <Levels>
        <Side $c="#f00">买</Side>
        <div>2</div>
        <div>3</div>
        <div>4</div>
        <div>5</div>
      </Levels>
      <BigOrder>
        <span>2.12</span>
        <span>41773</span>
      </BigOrder>
    </Depth>
    {quotes.map((q) => (
      <QuoteLine key={q[0]} data={q} />
    ))}
    <QuoteLine $h={24} $rule $under data={["外盘", "40083", R, "内盘", "14706", G]} />
    <Ticks>
      <TickList>
        {tickData.map(([t, p, v, rule]) => (
          <TickRow key={t} $rule={rule}>
            <span>{t}</span>
            <Figure $c={R}>{p}</Figure>
            <Figure $c={G}>{v}</Figure>
          </TickRow>
        ))}
      </TickList>
      <TickScroll>▲</TickScroll>
    </Ticks>
    <Cursor />
  </QuotePanel>
);

const PeriodBar = styled.nav`
  display: flex;
  flex-direction: column;
  align-items: stretch;
  align-self: flex-start;
  flex: none;
  width: 24px;
  margin: 3px 0 0 1px;
  padding-top: 4px;
  border-top: 1px solid #999;
  border-bottom: 1px solid #999;
`;

const Period = styled.button`
  height: 22px;
  border: ${(p) => (p.$on ? "1px solid #0a64ad" : "0")};
  background: ${(p) => (p.$on ? "#f6fafd" : "none")};
  font: 13px/20px ${UI};

  svg {
    display: block;
    margin: 0 auto;
  }
`;

const periods = ["line", "Bn", "box", "Sn", "1", "Mn", "3", "5", "10", "15", "30", "时", "Hn", "日", "Dn", "周", "月", "季", "年"];

const PeriodGlyph = ({ boxed }) => (
  <svg width="16" height="16" viewBox="0 0 16 16" fill="none" stroke="#000" strokeWidth="1.300">
    {boxed ? <path d="M2 2h12v12H2zM4 9l3-3 2 3 3-3" /> : <path d="m1 10 4-5 3 4 3-1 4-5M1 14h14" />}
  </svg>
);

/* ---------- bottom bars ---------- */

const StatusBar = styled.footer`
  display: flex;
  align-items: center;
  flex: none;
  height: 25px;
  padding: 4px 0 0 152px;
  border-top: 3px solid #f0f0f0;
  background: #fff;
  box-shadow: inset 0 2px 0 #f0f0f0, inset 0 3px 0 #a0a0a0;
  font-size: 14px;
`;

const IndexText = styled.span`
  min-width: ${(p) => p.$min || 0}px;
  margin-left: ${(p) => p.$gap || 0}px;
  white-space: pre;
`;

const Gauge = styled.div`
  display: flex;
  flex-direction: column;
  gap: 2px;
  width: 149px;
  margin-left: 5px;
`;

const GaugeBar = styled.div`
  height: 11px;
  border: 1px solid #000;
  background: linear-gradient(90deg, #f00 50%, #178000 50%);
`;

const GaugeFoot = styled.div`
  width: 10px;
  height: 4px;
  background: #178000;
`;

const TaskBar = styled.div`
  display: flex;
  flex: none;
  height: 8px;
  padding: 0 79px 0 734px;
  justify-content: space-between;
  background: #1d1d1d;
  color: #eee;
  font-size: 12px;
  line-height: 22px;
  overflow: hidden;

  i {
    width: 48px;
    background: #4a4a4a;
  }
`;

/* ---------- floating windows ---------- */

const Window = styled.section`
  position: absolute;
  display: flex;
  flex-direction: column;
  left: ${(p) => p.$x}px;
  top: ${(p) => p.$y}px;
  width: ${(p) => p.$w}px;
  height: ${(p) => p.$h}px;
  background: #f0f0f0;
  border: 1px solid #555;
  box-shadow: 0 4px 16px rgba(0, 0, 0, 0.4);
`;

const WindowBar = styled.div`
  display: flex;
  align-items: center;
  flex: none;
  height: ${(p) => p.$h}px;
  padding: 0 ${(p) => p.$right}px 0 ${(p) => p.$left}px;
  gap: 5px;
  background: #fff;
  color: ${(p) => (p.$dim ? "#999" : "#000")};
  font-size: 12px;
`;

const BarButtons = styled.div`
  display: flex;
  gap: ${(p) => p.$gap}px;
  margin-left: auto;
  align-items: center;

  button {
    display: flex;
  }
`;

const DialogBody = styled.div`
  display: flex;
  flex-direction: column;
  flex: 1;
  padding: 9px 9px 0 10px;
`;

const TopRow = styled.div`
  display: flex;
  gap: 6px;
  padding-bottom: 7px;
  border-bottom: 1px solid #a0a0a0;
  box-shadow: 0 1px 0 #fff;
`;

const Column = styled.div`
  display: flex;
  flex-direction: column;
  width: ${(p) => (p.$w ? `${p.$w}px` : "auto")};
  flex: ${(p) => (p.$w ? "none" : 1)};
`;

const Sunken = styled.div`
  display: flex;
  flex-direction: ${(p) => (p.$col ? "column" : "row")};
  height: ${(p) => p.$h}px;
  margin-top: 1px;
  border: 1px solid #828790;
  background: ${(p) => p.$bg || "#fff"};
  overflow: hidden;
`;

const TreeList = styled.div`
  flex: 1;
  padding: 1px 0 0 1px;
  overflow: hidden;
`;

const ListTable = styled.table`
  width: 100%;
  border-collapse: collapse;
  table-layout: fixed;
  font-size: 12px;
  line-height: 17px;

  th {
    height: 25px;
    padding: 0 0 0 6px;
    font-weight: 400;
    text-align: left;
    border-right: 1px solid #aaa;
    border-bottom: 1px solid #aaa;
  }
  td {
    height: 17px;
    padding: 0 0 0 6px;
  }
`;

const NameCell = styled.td`
  && {
    padding-left: 5px;
  }
  & > div {
    display: flex;
    align-items: center;
    gap: 3px;
    height: 17px;
    overflow: hidden;
  }
`;

const FormulaRow = styled.tr`
  color: ${(p) => (p.$new ? "#00f" : "#000")};
  background: ${(p) => (p.$new ? "#fff" : "#f0f0f0")};
`;

const SortMark = styled.span`
  float: right;
  margin-right: 12px;
  color: #888;
`;

const FormulaIcon = () => (
  <svg width="14" height="15" viewBox="0 0 14 15" fill="none" stroke="#000">
    <path d="M3.500 5.500h-3v9h13v-9h-3M10 1H4l3 3-3 3h6" />
    <path d="M3 10h8" stroke="#800" />
    <path d="M3 12.500h8" stroke="#008" />
  </svg>
);

const Spacer = styled.div`
  flex: 1;
`;

const ParamText = styled.textarea`
  flex: 1;
  padding: 0 2px;
  resize: none;
  overflow: hidden;
  font: 14px/18px "Noto Sans CJK SC", sans-serif;
`;

const Inline = styled.div`
  display: flex;
  align-items: center;
  gap: ${(p) => p.$gap || 3}px;
  height: ${(p) => p.$h || 16}px;
  flex: none;
`;

const SelectBox = styled.span`
  position: relative;
  display: flex;
  align-items: center;
  width: ${(p) => p.$w}px;
  height: ${(p) => p.$h || 20}px;
  border: 1px solid #adadad;
  background: ${(p) => p.$bg || "#e3e3e3"};

  select,
  input {
    flex: 1;
    min-width: 0;
    padding-left: 3px;
    appearance: none;
    outline: none;
    font: ${(p) => (p.$date ? `10px "DejaVu Sans Mono", monospace` : `12px ${UI}`)};
  }
  svg {
    position: absolute;
    right: 4px;
    pointer-events: none;
  }
`;

const PushButton = styled.button`
  width: ${(p) => p.$w}px;
  height: 20px;
  border: 1px solid #adadad;
  background: #e1e1e1;
  line-height: 16px;
  ${(p) =>
    p.$focus &&
    css`
      border: 2px solid #0078d7;
      outline: 1px dotted #000;
      outline-offset: -4px;
    `}
`;

const ActionRow = styled.div`
  display: flex;
  justify-content: flex-end;
  gap: 7px;
  margin-top: 9px;
`;

const GroupRow = styled.div`
  display: flex;
  gap: 8px;
  margin-top: 7px;
`;

const Group = styled.fieldset`
  width: ${(p) => p.$w}px;
  height: ${(p) => p.$h}px;
  min-width: 0;
  margin: 0;
  padding: 0 5px;
  border: 1px solid #dcdcdc;
  overflow: hidden;

  legend {
    height: 16px;
    padding: 0 2px;
    line-height: 16px;
  }
`;

const ComboArea = styled.div`
  display: flex;
  justify-content: space-between;
  padding-right: 5px;
`;

const ComboList = styled.div`
  width: 231px;
  height: 77px;
  margin: 1px 0 0 1px;
  border: 1px solid #828790;
  background: #fff;
`;

const ButtonStack = styled.div`
  display: flex;
  flex-direction: column;
  gap: 6px;
  padding-top: 1px;
`;

const Check = styled.label`
  display: flex;
  align-items: center;
  gap: 3px;
  margin-left: 2px;

  input {
    position: relative;
    appearance: none;
    flex: none;
    width: 13px;
    height: 13px;
    border: 1px solid #333;
    border-radius: ${(p) => (p.$round ? "50%" : "0")};
    background: #fff;
  }
  input:checked::after {
    content: "";
    position: absolute;
    ${(p) =>
      p.$round
        ? css`
            inset: 2px;
            border-radius: 50%;
            background: #222;
          `
        : css`
            left: 4px;
            top: 1px;
            width: 3px;
            height: 7px;
            border: solid #222;
            border-width: 0 1px 1px 0;
            transform: rotate(42deg);
          `}
  }
`;

const Settings = styled.div`
  display: grid;
  grid-template-columns: 222px 108px;
  column-gap: 7px;
  row-gap: 1px;
  align-items: center;
`;

const MarketField = styled.div`
  height: 21px;
  padding: 1px 0 0 2px;
  border: 1px solid #6d6d6d;
  box-shadow: inset -1px -1px 0 #fff;
  overflow: hidden;
`;

const WideRow = styled.div`
  grid-column: 1 / -1;
  display: flex;
  align-items: center;
  gap: 8px;
  height: 20px;
`;

const CountInput = styled.input`
  width: 60px;
  height: 21px;
  padding-left: 2px;
  border: 1px solid #ccc;
  color: #777;
  font: 10px "DejaVu Sans Mono", monospace;
`;

const HistoryRow = styled.div`
  display: flex;
  align-items: center;
  justify-content: flex-end;
  gap: 20px;
  margin: 6px 9px 0 0;

  label {
    margin-right: -8px;
  }
`;

const Chevron = () => <FrameGlyph name="down" color="#555" size={10} />;

const Tick = ({ label, checked, round, name }) => (
  <Check $round={round}>
    <input type={round ? "radio" : "checkbox"} name={name} defaultChecked={checked} />
    <Song>{label}</Song>
  </Check>
);

const FilterDialog = () => (
  <Window $x={574} $y={88} $w={718} $h={512}>
    <WindowBar $h={25} $left={3} $right={16}>
      条件选股
      <BarButtons $gap={34}>
        <button aria-label="minimize"><FrameGlyph name="min" /></button>
        <button aria-label="maximize"><FrameGlyph name="max" color="#ccc" /></button>
        <button aria-label="close"><FrameGlyph name="close" /></button>
      </BarButtons>
    </WindowBar>
    <DialogBody>
      <TopRow>
        <Column $w={185}>
          <Song>公式组(_G):</Song>
          <Sunken $h={229}>
            <TreeList>
              {dialogTree.map((n) => (
                <TreeRow key={n[3]} node={n} height={18} plain />
              ))}
            </TreeList>
            <ScrollBar vertical thumb={165} after={24} />
          </Sunken>
        </Column>
        <Column $w={261}>
          <Song>公式列表(_L):</Song>
          <Sunken $h={229} $col>
            <ListTable>
              <colgroup>
                <col width="92" />
                <col width="60" />
                <col />
              </colgroup>
              <thead>
                <tr>
                  <th>
                    名称<SortMark>⁄</SortMark>
                  </th>
                  <th>类型</th>
                  <th>说明</th>
                </tr>
              </thead>
              <tbody>
                <FormulaRow $new>
                  <NameCell>
                    <div><FormulaIcon /><Song>上市天数...</Song></div>
                  </NameCell>
                  <td>选股</td>
                  <td />
                </FormulaRow>
                <FormulaRow>
                  <NameCell>
                    <div><FormulaIcon /><Song>王者</Song></div>
                  </NameCell>
                  <td>选股</td>
                  <td />
                </FormulaRow>
              </tbody>
            </ListTable>
            <Spacer />
            <ScrollBar thumb={101} after={122} />
          </Sunken>
        </Column>
        <Column>
          <Song>参数:</Song>
          <Sunken $h={147} $bg="#f0f0f0">
            <ParamText readOnly aria-label="参数" value="本指标无参数需要设置" />
            <ScrollBar vertical dim thumb={0} after={1} />
          </Sunken>
          <Inline $h={32} as="label">
            <Song>分析周期(_Y):</Song>
            <SelectBox $w={142}>
              <select defaultValue="5分钟">
                <option>5分钟</option>
              </select>
              <Chevron />
            </SelectBox>
          </Inline>
        </Column>
      </TopRow>
      <ActionRow>
        <PushButton $w={105}><Song>成功率测试(_T)..</Song></PushButton>
        <PushButton $w={88} $focus><Song>执行选股(_E)</Song></PushButton>
        <PushButton $w={88}><Song>选股结果(_R)..</Song></PushButton>
      </ActionRow>
      <GroupRow>
        <Group $w={338} $h={119}>
          <legend><Song>组合条件</Song></legend>
          <ComboArea>
            <ComboList />
            <ButtonStack>
              <PushButton $w={73}><Song>添加(_I)</Song></PushButton>
              <PushButton $w={73}><Song>删除(_D)</Song></PushButton>
              <PushButton $w={73}><Song>保存(_S)</Song></PushButton>
            </ButtonStack>
          </ComboArea>
          <Inline $gap={14} $h={28}>
            <Tick round name="join" label="与(_N)" checked />
            <Tick round name="join" label="或(_O)" />
          </Inline>
        </Group>
        <Group $w={351} $h={149}>
          <legend><Song>选股设置</Song></legend>
          <Settings>
            <MarketField><Song>深圳A股  深圳创业  上海A股  上海科创</Song></MarketField>
            <PushButton $w={108}><Song>改变范围(_C)...</Song></PushButton>
            <WideRow>
              <Tick label="复权数据(_W)" checked />
              <Tick label="停牌的品种(_P)" checked />
              <Tick label="取选股结果(_U)" />
            </WideRow>
            <Tick label="自动保存选股(_V)" />
            <PushButton $w={108}><Song>名称过滤(_Z)...</Song></PushButton>
            <Tick label="仅用当日分笔数据(可以提高速度)(:" />
            <span />
            <WideRow>
              <Tick round name="load" label="刷新 选项->维护中配置的默认数量" checked />
            </WideRow>
            <WideRow>
              <Inline>
                <Tick round name="load" label="刷新指定数量" />
                <CountInput defaultValue="1000" disabled aria-label="数量" />
                <Song> 的数据</Song>
              </Inline>
            </WideRow>
          </Settings>
        </Group>
      </GroupRow>
      <HistoryRow>
        <Tick label="历史阶段(_H)" checked />
        <SelectBox $w={90} $h={23} $bg="#fff" $date>
          <input defaultValue="2021/ 7/27" aria-label="开始" />
          <Chevron />
        </SelectBox>
        <svg width="18" height="9" viewBox="0 0 18 9" fill="none" stroke="#000">
          <path d="M0 4.500h17M13 1l4 3.500L13 8" />
        </svg>
        <SelectBox $w={90} $h={23} $bg="#fff" $date>
          <input defaultValue="2021/ 7/27" aria-label="结束" />
          <Chevron />
        </SelectBox>
      </HistoryRow>
    </DialogBody>
  </Window>
);

/* ---------- result window ---------- */

const ResultBody = styled.div`
  display: flex;
  gap: 2px;
  flex: 1;
  min-height: 0;
`;

const RunList = styled.div`
  width: 80px;
  flex: none;
  padding: 1px;
  border: 1px solid #828790;
  background: #fff;
  overflow: hidden;
  font: 10px/12px "DejaVu Sans Mono", monospace;
`;

const Run = styled.div`
  padding-left: 1px;
  overflow: hidden;
  color: ${(p) => (p.$on ? "#fff" : "#000")};
  background: ${(p) => (p.$on ? "#0078d7" : "none")};
`;

const ResultFrame = styled.div`
  display: flex;
  flex: 1;
  min-width: 0;
  border: 2px solid #828790;
  background: #fff;
`;

const ResultScroll = styled.div`
  flex: 1;
  overflow: hidden;
`;

const ResultTable = styled.table`
  width: 100%;
  border-collapse: collapse;
  table-layout: fixed;
  font-size: 12px;

  th {
    height: 25px;
    padding: 0 0 0 5px;
    border: solid #aaa;
    border-width: 0 1px 1px 0;
    font-weight: 400;
    text-align: left;
  }
  td {
    height: 17px;
    padding: 0 0 0 5px;
    border: solid #ececec;
    border-width: 0 1px 1px 0;
    line-height: 16px;
  }
  th:last-child,
  td:last-child {
    border-right: 0;
  }
`;

const Flag = styled.b`
  display: inline-block;
  width: 15px;
  height: 16px;
  padding-left: 2px;
  vertical-align: top;
  color: #f00;
  font: 700 14px/16px "Liberation Mono", monospace;
`;

const results = [
  ["603966", "法兰泰克", "43", "11.15"],
  ["603986", "兆易创新", "43", "205.62"],
  ["603993", "洛阳钼业", "43", "6.92"],
  ["605208", "永茂泰", "43", "25.41"],
  ["605258", "协和电子", "43", "33.45"],
  ["605298", "必得科技", "43", "18.80"],
  ["605305", "中际联合", "43", "55.10"],
  ["688005", "容百科技", "43", "117.00"],
  ["688008", "澜起科技", "44", "65.78"],
  ["688080", "映翰通", "44", "52.40"],
  ["688126", "沪硅产业", "44", "34.04"],
  ["688139", "海尔生物", "44", "109.26"],
  ["688186", "广大特材", "44", "40.41"],
  ["688188", "柏楚电子", "44", "463.96"],
  ["688233", "神工股份", "44", "58.59"],
  ["688268", "华特气体", "44", "88.33"],
  ["688300", "联瑞新材", "44", "69.00"],
  ["688538", "和辉光电", "45", "3.72"],
  ["688538", "和辉光电", "45", "3.72"],
];

const ResultWindow = () => (
  <Window $x={925} $y={618} $w={755} $h={392}>
    <WindowBar $h={30} $left={8} $right={17} $dim>
      <svg width="15" height="17" viewBox="0 0 15 17" fill="none" stroke="#777">
        <path d="M.5.5h9l3 3v12H.5z" fill="#eee" />
        <path d="M2 4h6M2 7h4M2 10h3" stroke="#bbb" />
        <circle cx="9" cy="9" r="3" fill="#fff" stroke="#333" />
        <path d="m11 11 3 4" stroke="#333" strokeWidth="2" />
      </svg>
      选股结果
      <BarButtons $gap={34}>
        <button aria-label="minimize"><FrameGlyph name="min" color="#777" /></button>
        <button aria-label="maximize"><FrameGlyph name="max" color="#777" /></button>
        <button aria-label="close"><FrameGlyph name="close" color="#777" /></button>
      </BarButtons>
    </WindowBar>
    <ResultBody>
      <RunList>
        <Run>2021/07/28 00:12</Run>
        <Run>2021/07/28 08:30</Run>
        <Run $on>2021-07-28 08:44</Run>
      </RunList>
      <ResultFrame>
        <ResultScroll>
          <ResultTable>
            <colgroup>
              {[41, 54, 70, 130, 91, 60, 60, 70].map((w, i) => (
                <col key={i} width={w} />
              ))}
              <col />
            </colgroup>
            <thead>
              <tr>
                {["序号", "代码", "名称", "选股时间", "选股公式", "选股价格", "现价", "盈亏%", ""].map((h) => (
                  <th key={h}>{h}</th>
                ))}
              </tr>
            </thead>
            <tbody>
              {results.map(([code, name, sec, price], i) => (
                <tr key={i}>
                  <td>
                    <Flag>S</Flag>
                    <Song>1..</Song>
                  </td>
                  <td><Song>{code}</Song></td>
                  <td><Song>{name}</Song></td>
                  <td><Song>{`2021-07-28 08:44:${sec}`}</Song></td>
                  <td><Song>王者</Song></td>
                  <td><Song>{price}</Song></td>
                  <td><Song>{price}</Song></td>
                  <td><Song>0.00</Song></td>
                  <td />
                </tr>
              ))}
              <tr>
                {results.slice(0, 9).map((_, i) => (
                  <td key={i} />
                ))}
              </tr>
            </tbody>
          </ResultTable>
        </ResultScroll>
        <ScrollBar vertical before={271} thumb={50} />
      </ResultFrame>
    </ResultBody>
  </Window>
);

/* ---------- helper ball on the left edge ---------- */

const Ball = styled.div`
  position: absolute;
  left: -18px;
  top: 912px;
  width: 32px;
  height: 32px;
  border: 2px solid #00009c;
  border-radius: 50%;
  background: #f4f4ff;
  color: #1010e0;
  font-size: 14px;
  font-weight: 700;
  line-height: 28px;
  text-align: center;
`;

const BallClose = styled.button`
  position: absolute;
  left: 10px;
  top: 909px;
  width: 10px;
  height: 10px;
  border: 1px dotted #000;
  display: grid;
  place-items: center;
`;

const menus = ["文件(F)", "板块(M)", "画面(P)", "查看(V)", "交易(O)", "分析(A)", "工具(T)", "窗口(W)", "帮助(H)"];
const links = ["论 坛", "股票池", "锁 定", "客 服", "策略库", "公 式", "购 买", "账 户", "委 托", "Python", "云课堂", "行 情"];

const ToolButton = ({ name, caret, on }) => (
  <Tool $caret={caret} $on={on} aria-label={name}>
    <Glyph name={name} />
    {caret && <Caret />}
  </Tool>
);

const App = () => (
  <Page>
    <GlobalStyle />
    <TitleBar>
      <AppLogo />
      <TitleText>金字塔决策交易系统 - [免费登录] - [技术分析]</TitleText>
      <LinkRow>
        {links.map((l) => (
          <LinkButton key={l} $hot={l === "购 买"}>
            {l}
          </LinkButton>
        ))}
      </LinkRow>
      <WinControls>
        <WinButton aria-label="minimize"><FrameGlyph name="min" color="#fff" size={10} weight={2} /></WinButton>
        <WinButton aria-label="maximize"><FrameGlyph name="max" color="#fff" size={10} weight={2} /></WinButton>
        <WinButton aria-label="close"><FrameGlyph name="close" color="#fff" size={10} weight={3} /></WinButton>
      </WinControls>
    </TitleBar>

    <MenuBar>
      <Grip />
      <MdiLogo />
      {menus.map((m, i) => (
        <MenuItem key={m} $first={i === 0}>
          {m.slice(0, 3)}
          <u>{m[3]}</u>)
        </MenuItem>
      ))}
      <MdiControls>
        <FrameGlyph name="min" size={8} weight={3} />
        <FrameGlyph name="restore" size={10} weight={2} />
        <FrameGlyph name="close" size={9} weight={2} />
      </MdiControls>
    </MenuBar>

    <ToolBar>
      <ToolGroup>
        <Grip />
        <ToolButton name="home" />
        <Divider />
        <ToolButton name="pen" on />
        <ToolButton name="down" />
        <ToolButton name="sync" />
        <ToolButton name="grid" caret />
        <Divider />
        <ToolButton name="candle" />
        <ToolButton name="alert" />
        <ToolButton name="edit" />
        <Divider />
        <ToolButton name="play" />
        <ToolButton name="note" />
        <ToolButton name="dollar" caret on />
        <ToolButton name="filter" />
        <ToolButton name="swap" />
        <Divider />
        <ToolButton name="move" />
        <ToolButton name="ruler" />
        <ToolButton name="zoomIn" />
        <ToolButton name="zoomOut" />
        <Divider />
        <ToolButton name="gear" />
        <Caret $low />
      </ToolGroup>
      <ToolGroup>
        <Grip />
        <ToolButton name="cursor" on />
        <Divider />
        {["line", "percent", "fence", "angle", "hbars", "hash", "square", "circle"].map((n) => (
          <ToolButton key={n} name={n} caret />
        ))}
        <ToolButton name="letter" />
        <Divider />
        <ToolButton name="magnet" />
        <ToolButton name="copy" />
        <ToolButton name="cross" />
        <ToolButton name="trash" />
        <ToolButton name="lock" />
        <ToolButton name="color" caret />
        <ToolButton name="save" caret />
        <Divider />
        {["买", "卖", "平", "反"].map((t) => (
          <Tool key={t}>{t}</Tool>
        ))}
        <Caret $low />
      </ToolGroup>
    </ToolBar>

    <Workspace>
      <SidePanel>
        <PanelHead>
          <PanelName>管理面板</PanelName>
          <svg width="9" height="10" viewBox="0 0 9 10" fill="none" stroke="#000">
            <path d="M2.500 0v5.500h4V0zM5.500 0v5M0 6h9M4.500 6v4" />
          </svg>
          <FrameGlyph name="close" size={9} weight={2} />
        </PanelHead>
        <PanelTools>
          {["docPlus", "docAdd", "pencil", "search"].map((n) => (
            <button key={n} aria-label={n}>
              <Glyph name={n} color="#555" />
            </button>
          ))}
        </PanelTools>
        <TreeBox>
          {sideTree.map((n, i) => (
            <TreeRow key={i} node={n} height={20} />
          ))}
        </TreeBox>
        <ScrollBar thumb={185} after={14} />
        <TabStrip>
          <TabArrow>◁</TabArrow>
          <Tab $first>公式</Tab>
          <Tab>板块</Tab>
          <Tab>VBA</Tab>
          <Tab>指标组</Tab>
          <Tab $cut>画面</Tab>
          <TabArrow>▶</TabArrow>
        </TabStrip>
      </SidePanel>

      <ChartArea>
        <PricePane />
        <TimePane />
        <VolumePane />
        <SignalPane />
      </ChartArea>

      <Quote />
      <PeriodBar>
        {periods.map((p) => (
          <Period key={p} $on={p === "5"} aria-label={p}>
            {p === "line" || p === "box" ? <PeriodGlyph boxed={p === "box"} /> : p}
          </Period>
        ))}
        <Period>◂</Period>
      </PeriodBar>
    </Workspace>

    <StatusBar>
      <IndexText>
        <Tint $c="#178000">26) </Tint>7027亿
      </IndexText>
      <Gauge>
        <GaugeBar />
        <GaugeFoot />
      </Gauge>
      <IndexText $gap={81} $min={220}>
        深 <Tint $c="#178000">14094 -3.67% (-537.22)</Tint> 8314亿
      </IndexText>
      <Gauge>
        <GaugeBar />
        <GaugeFoot />
      </Gauge>
      <IndexText $gap={76}>300</IndexText>
    </StatusBar>
    <TaskBar>
      <i />
      <span>8:45</span>
    </TaskBar>

    <Ball>招</Ball>
    <BallClose aria-label="close">
      <FrameGlyph name="close" size={6} />
    </BallClose>

    <FilterDialog />
    <ResultWindow />
    <Window $x={8} $y={983} $w={144} $h={27}>
      <WindowBar $h={25} $left={14} $right={16}>
        <svg width="12" height="13" viewBox="0 0 12 13">
          <path d="M6 0q4 3 4 8l2 3H0l2-3q0-5 4-8zM4 11h4v2H4z" fill="#555" />
        </svg>
        <FrameGlyph name="restore" color="#999" size={11} />
        <BarButtons $gap={35}>
          <FrameGlyph name="max" color="#888" size={11} />
          <FrameGlyph name="close" color="#888" size={11} />
        </BarButtons>
      </WindowBar>
    </Window>
  </Page>
);

export default App;
